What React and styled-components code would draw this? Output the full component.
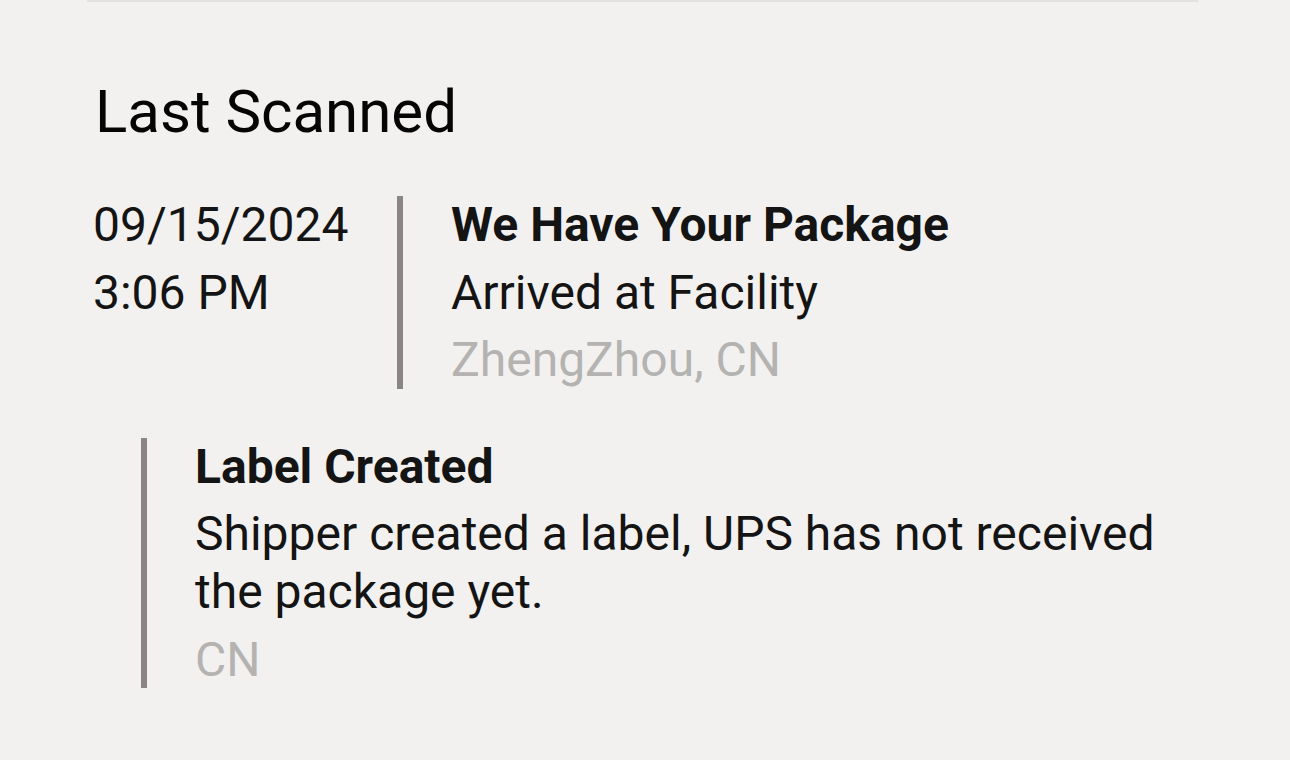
import React from "react";
import styled, { createGlobalStyle } from "styled-components";

const GlobalStyle = createGlobalStyle`
  body {
    margin: 0;
    background: #f2f1ef;
    font-family: Roboto, "Liberation Sans", sans-serif;
    color: #141414;
  }
`;

const StyledSection = styled.section`
  margin: 0 92px 0 87px;
  border-top: 2px solid #e3e2e0;
  padding: 74px 0 40px 3px;
`;

const StyledHeading = styled.h2`
  font-size: 60px;
  font-weight: 400;
  line-height: 1.2;
  color: #050505;
  margin: 0 0 48px 5px;
`;

const StyledScanRow = styled.div`
  display: flex;
  align-items: flex-start;
`;

const StyledDateColumn = styled.div`
  width: 304px;
  padding-left: 3px;
  flex-shrink: 0;
`;

const StyledEvent = styled.div`
  border-left: 6px solid #8b8585;
  padding-left: 48px;
  margin-left: ${(props) => props.indent || 0}px;
  margin-top: ${(props) => props.offset || 0}px;
  flex: 1;
`;

const StyledLine = styled.p`
  font-size: 48px;
  line-height: 1.2;
  margin: 0;
  font-weight: ${(props) => (props.bold ? 700 : 400)};
  color: ${(props) => (props.muted ? "#b4b3b1" : "#141414")};

  & + & {
    margin-top: 10px;
  }
`;

const events = [
  {
    title: "Label Created",
    detail: "Shipper created a label, UPS has not received the package yet.",
    location: "CN",
  },
];

export default function App() {
  return (
    <>
      <GlobalStyle />
      <StyledSection>
        <StyledHeading>Last Scanned</StyledHeading>
        <StyledScanRow>
          <StyledDateColumn>
            <StyledLine>09/15/2024</StyledLine>
            <StyledLine>3:06 PM</StyledLine>
          </StyledDateColumn>
          <StyledEvent>
            <StyledLine bold>We Have Your Package</StyledLine>
            <StyledLine>Arrived at Facility</StyledLine>
            <StyledLine muted>ZhengZhou, CN</StyledLine>
          </StyledEvent>
        </StyledScanRow>
        {events.map((event) => (
          <StyledEvent key={event.title} indent={51} offset={49}>
            <StyledLine bold>{event.title}</StyledLine>
            <StyledLine>{event.detail}</StyledLine>
            <StyledLine muted>{event.location}</StyledLine>
          </StyledEvent>
        ))}
      </StyledSection>
    </>
  );
}
